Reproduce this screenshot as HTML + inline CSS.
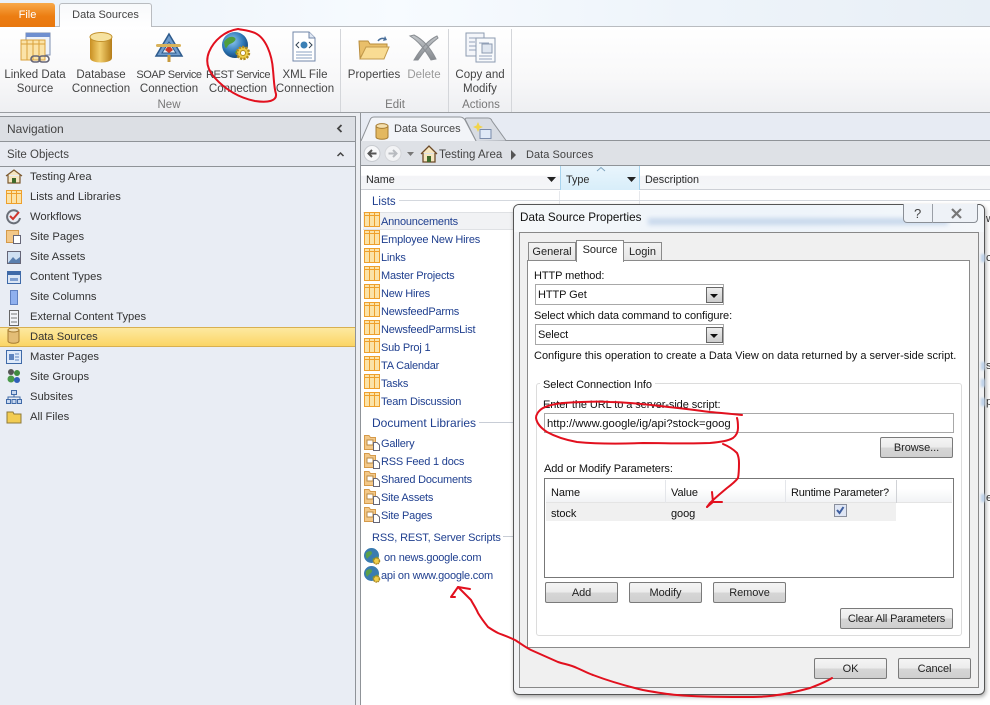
<!DOCTYPE html>
<html><head><meta charset="utf-8"><style>
html,body{margin:0;padding:0}
body{width:990px;height:705px;overflow:hidden;position:relative;background:#fff;font-family:"Liberation Sans",sans-serif;font-size:11.2px;color:#2a2a2a}
.a{position:absolute;box-sizing:border-box}
.t{position:absolute;white-space:nowrap;line-height:14px}
.c{position:absolute;text-align:center;line-height:14px;white-space:nowrap;transform:translateX(-50%);font-size:11.500px;margin-top:1px}
.n{font-size:11px;letter-spacing:-.4px}
.l{color:#1f3f8f;font-size:11px;letter-spacing:-.2px;margin-top:1px}
.h{color:#1f3f8f;font-size:12px}
.d{color:#111;font-size:11px;letter-spacing:-.08px;margin-top:1px}
.btn{position:absolute;box-sizing:border-box;border:1px solid #7a7a7a;border-radius:2px;background:linear-gradient(#f4f4f4 0,#ececec 48%,#d6d6d6 52%,#cfcfcf 100%);text-align:center;color:#222;font-size:11px;letter-spacing:-.08px}
.nav{position:absolute;left:30px;color:#333;line-height:14px;margin-top:1px}
svg{position:absolute;overflow:visible}
</style></head><body>

<!-- top strip -->
<div class="a" style="left:0;top:0;width:990px;height:27px;background:linear-gradient(90deg,#eaf1f8,#f7fbff 40%,#eef4fa 70%,#e8eff6);"></div>
<div class="a" style="left:0;top:26px;width:990px;height:1px;background:#b9bcc0"></div>
<div class="a" style="left:0;top:3px;width:55px;height:24px;background:linear-gradient(#f8a94a,#ec7d12 55%,#e8780f);border-radius:0 3px 0 0;color:#fff;text-align:center;line-height:24px;font-size:11px">File</div>
<div class="a" style="left:59px;top:3px;width:93px;height:25px;background:linear-gradient(#f8f9fb,#fff);border:1px solid #b9bcc0;border-bottom:none;border-radius:3px 3px 0 0;text-align:center;line-height:23px;color:#444;font-size:11px">Data Sources</div>

<!-- ribbon -->
<div class="a" style="left:0;top:27px;width:990px;height:85px;background:linear-gradient(#fff,#f8f8f9 60%,#eeeff2)"></div>
<div class="a" style="left:340px;top:29px;width:1px;height:83px;background:#d4d6da"></div>
<div class="a" style="left:448px;top:29px;width:1px;height:83px;background:#d4d6da"></div>
<div class="a" style="left:511px;top:29px;width:1px;height:83px;background:#d4d6da"></div>
<div class="a" style="left:0;top:112px;width:990px;height:1px;background:#9a9da1"></div>
<div class="a" style="left:0;top:113px;width:990px;height:592px;background:#eceef2"></div>

<div class="c" style="left:35px;top:67px;color:#444">Linked Data<br>Source</div>
<div class="c" style="left:101px;top:67px;color:#444">Database<br>Connection</div>
<div class="c" style="left:169px;top:67px;color:#444"><span class="n">SOAP Service</span><br>Connection</div>
<div class="c" style="left:238px;top:67px;color:#444"><span class="n">REST Service</span><br>Connection</div>
<div class="c" style="left:305px;top:67px;color:#444">XML File<br>Connection</div>
<div class="c" style="left:374px;top:67px;color:#444">Properties</div>
<div class="c" style="left:424px;top:67px;color:#9a9a9a">Delete</div>
<div class="c" style="left:480px;top:67px;color:#444">Copy and<br>Modify</div>
<div class="c" style="left:169px;top:97px;color:#777">New</div>
<div class="c" style="left:395px;top:97px;color:#777">Edit</div>
<div class="c" style="left:481px;top:97px;color:#777">Actions</div>

<!-- ribbon icons -->
<svg style="left:0;top:0" width="520" height="66" viewBox="0 0 520 66">
 <defs>
  <linearGradient id="db" x1="0" x2="1" y1="0" y2="0"><stop offset="0" stop-color="#c98f22"/><stop offset=".45" stop-color="#f2cf6e"/><stop offset="1" stop-color="#b57d18"/></linearGradient>
  <radialGradient id="gl" cx=".4" cy=".35" r=".7"><stop offset="0" stop-color="#8ec7ef"/><stop offset=".6" stop-color="#2e78b8"/><stop offset="1" stop-color="#123f6f"/></radialGradient>
  <linearGradient id="gx" x1="0" x2="0" y1="0" y2="1"><stop offset="0" stop-color="#c4c8cc"/><stop offset="1" stop-color="#85898e"/></linearGradient>
 </defs>
 <!-- linked -->
 <rect x="26" y="33" width="24" height="22" fill="#eef3fb" stroke="#7d8fb0"/><rect x="26" y="33" width="24" height="4" fill="#6f8fcf"/>
 <rect x="21" y="40" width="24" height="20" fill="#fbe3a8" stroke="#d9a23c"/><path d="M21 44H45M27 40V60M33 40V60M39 40V60" stroke="#d9a23c" fill="none"/>
 <rect x="31" y="56" width="9" height="6" rx="3" fill="none" stroke="#667" stroke-width="1.600"/><rect x="39" y="56" width="10" height="6" rx="3" fill="none" stroke="#667" stroke-width="1.600"/>
 <!-- database -->
 <path d="M90 37V58C90 64 112 64 112 58V37Z" fill="url(#db)"/><ellipse cx="101" cy="37" rx="11" ry="4.500" fill="#f6e2a0" stroke="#c3912c"/>
 <!-- soap -->
 <path d="M169 34L182 56H156Z" fill="#6f9ccc" stroke="#2d5a8c" stroke-width="1.500"/><path d="M169 42L176 53H162Z" fill="#e8eef6" stroke="#2d5a8c"/><path d="M169 45L173 50 169 53 165 50Z" fill="#c8382c"/>
 <rect x="156" y="44" width="25" height="3" rx="1.500" fill="#d9b25a"/><rect x="167.500" y="55" width="3" height="7" fill="#c79a3c"/>
 <!-- rest -->
 <circle cx="235" cy="45" r="13" fill="url(#gl)"/><path d="M224 42c4-6 9-6 11-4s-2 5-5 6-3 6-5 3zM235 52c3-3 7-3 9-5 1 3-1 7-5 8-2 0-4-1-4-3z" fill="#4f9e3e"/>
 <circle cx="243" cy="53" r="6" fill="#f0cf4a" stroke="#b08a1e" stroke-width="2.400" stroke-dasharray="2.200 1.200"/><circle cx="243" cy="53" r="2.500" fill="#fff" stroke="#b08a1e"/>
 <!-- xml -->
 <path d="M293 32H309L315 38V61H293Z" fill="#fff" stroke="#7287a8"/><path d="M309 32V38H315" fill="#dfe7f3" stroke="#7287a8"/><path d="M299 42l-3 3 3 3M309 42l3 3-3 3" stroke="#345" fill="none"/><circle cx="304" cy="45" r="3.500" fill="#3a7fb5"/><path d="M296 52H312M296 55H312M296 58H312" stroke="#8aa0c0"/>
 <!-- properties -->
 <path d="M360 58L359 41H368L370 44H387L387 47H367Z" fill="#e9bf6a" stroke="#b88c3c"/><path d="M360 59L366 47H389L384 59Z" fill="#f9dc93" stroke="#c29a4c"/><path d="M378 41c2-3 5-3 7-2" stroke="#4a6f9a" stroke-width="1.500" fill="none"/><path d="M385 36l2 4-4 1z" fill="#4a6f9a"/>
 <!-- delete -->
 <path d="M410 36C418 41 424 48 431 60L436 59C431 49 424 40 414 35ZM437 36C428 40 420 50 414 60L418 60C424 51 430 44 438 38Z" fill="url(#gx)" stroke="#8a8e93" stroke-width="1"/>
 <!-- copy -->
 <rect x="466" y="33" width="18" height="23" fill="#f4f6fa" stroke="#8c9bb0"/><path d="M469 38h12M469 42h6M469 46h12M469 50h12" stroke="#93a3bb"/><rect x="476" y="38" width="19" height="24" fill="#f8fafc" stroke="#8c9bb0"/><rect x="482" y="44" width="10" height="9" fill="#dfe6f0" stroke="#8c9bb0"/><path d="M479 43h10M479 56h13M479 59h13" stroke="#93a3bb"/>
</svg>

<!-- navigation panel -->
<div class="a" style="left:0;top:116px;width:356px;height:589px;background:#e9edf4;border-top:1px solid #8f9398;border-right:1px solid #8f9398"></div>
<div class="a" style="left:0;top:117px;width:355px;height:25px;background:#dcdfe4;border-bottom:1px solid #8f9398"></div>
<div class="t" style="left:7px;top:122px;color:#444;font-size:12px">Navigation</div>
<svg style="left:336px;top:124px" width="8" height="10"><path d="M5.500 1L2 4.500 5.500 8" stroke="#444" stroke-width="1.800" fill="none"/></svg>
<div class="a" style="left:0;top:142px;width:355px;height:25px;border-bottom:1px solid #8f9398;background:#e8ebf2"></div>
<div class="t" style="left:7px;top:148px;color:#444;font-size:11.500px">Site Objects</div>
<svg style="left:336px;top:151px" width="12" height="8"><path d="M1.500 5L4.500 2 7.500 5" stroke="#444" stroke-width="1.500" fill="none"/></svg>
<div class="a" style="left:0;top:327px;width:355px;height:20px;background:linear-gradient(#fde9a0,#fbd565);border-top:1px solid #d8b050;border-bottom:1px solid #d8b050"></div>

<div class="nav" style="top:169px">Testing Area</div>
<div class="nav" style="top:189px">Lists and Libraries</div>
<div class="nav" style="top:209px">Workflows</div>
<div class="nav" style="top:229px">Site Pages</div>
<div class="nav" style="top:249px">Site Assets</div>
<div class="nav" style="top:269px">Content Types</div>
<div class="nav" style="top:289px">Site Columns</div>
<div class="nav" style="top:309px">External Content Types</div>
<div class="nav" style="top:329px">Data Sources</div>
<div class="nav" style="top:349px">Master Pages</div>
<div class="nav" style="top:369px">Site Groups</div>
<div class="nav" style="top:389px">Subsites</div>
<div class="nav" style="top:409px">All Files</div>

<svg style="left:0;top:160px" width="30" height="270">
 <path d="M6 16L14 10 22 16M8 15V23H20V15" fill="#f6e6c0" stroke="#7c5a30" stroke-width="1.200"/><rect x="12" y="18" width="4" height="5" fill="#3f6a2a"/>
 <rect x="6.500" y="30.500" width="15" height="13" fill="#fbe3a8" stroke="#eea02c"/><path d="M6.500 33.500H21.500M11.500 30.500V43.500M16.500 30.500V43.500" stroke="#eea02c" fill="none"/>
 <path d="M18 52A6.500 6.500 0 1 0 20 58" fill="none" stroke="#6a6f78" stroke-width="2"/><path d="M10 56l3 3 6-7" stroke="#d0352c" stroke-width="2" fill="none"/>
 <rect x="6.500" y="70.500" width="12" height="12" fill="#f3c888" stroke="#d59a4a"/><rect x="13.500" y="75.500" width="7" height="8" fill="#fff" stroke="#667"/>
 <rect x="7.500" y="91.500" width="13" height="12" fill="#cfe0f2" stroke="#667"/><path d="M8 103l5-6 3 3 4-3v6z" fill="#5a7fae"/>
 <rect x="7.500" y="111.500" width="13" height="12" fill="#dbe6f5" stroke="#3f6aa8"/><rect x="8" y="112" width="12" height="3" fill="#3f6aa8"/><rect x="10" y="118" width="8" height="3" fill="#7f9fd0"/>
 <rect x="10.500" y="130.500" width="7" height="14" fill="#8fb0ee" stroke="#5f80c0"/>
 <rect x="9.500" y="150.500" width="9" height="15" fill="#f2f4f8" stroke="#666"/><path d="M11 154h6M11 158h6M11 162h6" stroke="#777"/>
 <path d="M8 170V181C8 184 19 184 19 181V170Z" fill="#e3bd76" stroke="#a67c32"/><ellipse cx="13.500" cy="170" rx="5.500" ry="2" fill="#f4dfae" stroke="#a67c32"/>
 <rect x="6.500" y="190.500" width="15" height="13" fill="#dfeafa" stroke="#3f6aa8"/><rect x="9" y="194" width="5" height="6" fill="#5f85c0"/><path d="M15 194h4M15 197h4M15 200h4" stroke="#5f85c0"/>
 <circle cx="11" cy="212" r="3" fill="#555"/><circle cx="17" cy="213" r="3" fill="#3f8a3f"/><circle cx="11" cy="219" r="3.500" fill="#4a9a4a"/><circle cx="17" cy="220" r="3" fill="#3060b8"/>
 <rect x="11.500" y="230.500" width="5" height="4" fill="#c8d8f0" stroke="#3f6aa8"/><path d="M14 235v2M8 239v-2H20v2" stroke="#3f6aa8" fill="none"/><rect x="6.500" y="239.500" width="4" height="4" fill="#c8d8f0" stroke="#3f6aa8"/><rect x="12" y="239.500" width="4" height="4" fill="#c8d8f0" stroke="#3f6aa8"/><rect x="17.500" y="239.500" width="4" height="4" fill="#c8d8f0" stroke="#3f6aa8"/>
 <path d="M7 252h6l1 2h7v9H7z" fill="#f2cc52" stroke="#8f7a3a"/>
</svg>

<!-- right panel -->
<div class="a" style="left:360px;top:113px;width:630px;height:592px;background:#fff;border-left:1px solid #8f9398"></div>
<div class="a" style="left:360px;top:113px;width:630px;height:28px;background:#e7ebf3;border-bottom:1px solid #8f9398;border-left:1px solid #8f9398"></div>
<svg style="left:360px;top:116px" width="150" height="26">
 <path d="M116 25L106 5Q104 2 107 2H128Q131 2 132 5L146 24.500" fill="#d8dce3" stroke="#8f9398"/>
 <path d="M1 25L10 4Q11 1 14 1H100Q103 1 105 4L116 25" fill="#f2f4f8" stroke="#8f9398"/>
 <path d="M16 10V21C16 24 28 24 28 21V10Z" fill="#e3b860" stroke="#a67c32"/><ellipse cx="22" cy="10" rx="6" ry="2.400" fill="#f4dfae" stroke="#a67c32"/>
 <rect x="120" y="13.500" width="11" height="9" fill="#dfe9f7" stroke="#7a8cab"/><path d="M118 6l1.500 3.500L123 11l-3.500 1.500L118 16l-1.500-3.500L113 11l3.500-1.500z" fill="#f2d44a"/>
</svg>
<div class="t" style="left:394px;top:122px;color:#444;font-size:11px">Data Sources</div>
<div class="a" style="left:360px;top:141px;width:630px;height:25px;background:#dee1e6;border-bottom:1px solid #8f9398;border-left:1px solid #8f9398"></div>
<svg style="left:362px;top:143px" width="80" height="24">
 <circle cx="10" cy="10.500" r="8" fill="#f7f8fa" stroke="#c8cbd0"/><path d="M14.500 10.500H7M10 7L6.500 10.500 10 14" stroke="#555" stroke-width="2" fill="none"/>
 <circle cx="31" cy="10.500" r="8" fill="#f2f3f5" stroke="#d4d6da"/><path d="M26.500 10.500H34M31 7L34.500 10.500 31 14" stroke="#b8bbc0" stroke-width="2" fill="none"/>
 <path d="M45 9h7l-3.500 4z" fill="#777"/>
 <path d="M59 11L67 3 75 11M61 10V19H73V10" fill="#f6e6c0" stroke="#6c4a28" stroke-width="1.300"/><rect x="65" y="13" width="4" height="6" fill="#3f6a2a"/>
</svg>
<div class="t" style="left:439px;top:148px;color:#444;font-size:11.500px">Testing Area</div>
<svg style="left:510px;top:150px" width="8" height="10"><path d="M1 0L6 5 1 10z" fill="#555"/></svg>
<div class="t" style="left:526px;top:148px;color:#444;font-size:11px;letter-spacing:.05px">Data Sources</div>

<!-- column headers -->
<div class="a" style="left:361px;top:166px;width:629px;height:24px;background:linear-gradient(#fff 0,#fff 40%,#f3f4f7 45%,#f5f6f8 100%);border-bottom:1px solid #cdd0d6"></div>
<div class="a" style="left:560px;top:166px;width:80px;height:24px;background:linear-gradient(#e9f5fc,#d8eefa);border-left:1px solid #a8d4ee;border-right:1px solid #a8d4ee"></div>
<div class="t" style="left:366px;top:173px;font-size:10.800px">Name</div>
<div class="t" style="left:566px;top:173px;font-size:10.800px">Type</div>
<div class="t" style="left:645px;top:173px;font-size:10.800px">Description</div>
<svg style="left:0;top:0" width="640" height="190"><path d="M547 177h9l-4.500 5zM627 177h9l-4.500 5z" fill="#222"/><path d="M597 171l4-3.500 4 3.500" stroke="#7fa4be" fill="none"/></svg>
<div class="a" style="left:559px;top:191px;width:1px;height:30px;background:#e6e8ec"></div>
<div class="a" style="left:639px;top:191px;width:1px;height:14px;background:#e6e8ec"></div>

<!-- groups -->
<div class="t h" style="left:372px;top:195px;font-size:11.500px">Lists</div>
<div class="a" style="left:399px;top:200px;width:591px;height:1px;background:#d4d8de"></div>
<div class="a" style="left:363px;top:212px;width:150px;height:18px;background:#f1f2f4;border-top:1px solid #dfe1e4;border-bottom:1px solid #dfe1e4"></div>
<div class="t l" style="left:381px;top:214px">Announcements</div>
<div class="t l" style="left:381px;top:232px">Employee New Hires</div>
<div class="t l" style="left:381px;top:250px">Links</div>
<div class="t l" style="left:381px;top:268px">Master Projects</div>
<div class="t l" style="left:381px;top:286px">New Hires</div>
<div class="t l" style="left:381px;top:304px">NewsfeedParms</div>
<div class="t l" style="left:381px;top:322px">NewsfeedParmsList</div>
<div class="t l" style="left:381px;top:340px">Sub Proj 1</div>
<div class="t l" style="left:381px;top:358px">TA Calendar</div>
<div class="t l" style="left:381px;top:376px">Tasks</div>
<div class="t l" style="left:381px;top:394px">Team Discussion</div>
<div class="t h" style="left:372px;top:416px">Document Libraries</div>
<div class="a" style="left:479px;top:422px;width:35px;height:1px;background:#c8cdd6"></div>
<div class="t l" style="left:381px;top:436px">Gallery</div>
<div class="t l" style="left:381px;top:454px">RSS Feed 1 docs</div>
<div class="t l" style="left:381px;top:472px">Shared Documents</div>
<div class="t l" style="left:381px;top:490px">Site Assets</div>
<div class="t l" style="left:381px;top:508px">Site Pages</div>
<div class="t h" style="left:372px;top:531px;font-size:11px;letter-spacing:-.13px">RSS, REST, Server Scripts</div>
<div class="a" style="left:503px;top:536px;width:11px;height:1px;background:#c8cdd6"></div>
<div class="t l" style="left:384px;top:550px">on news.google.com</div>
<div class="t l" style="left:381px;top:568px">api on www.google.com</div>

<svg style="left:360px;top:205px" width="30" height="380">
 <defs><g id="li"><rect x="4.500" y="0.500" width="15" height="14" fill="#fbe3a8" stroke="#eea02c"/><path d="M4.500 3.500H19.500M9.500 .5V14.500M14.500 .5V14.500" stroke="#eea02c" fill="none"/></g>
 <g id="dc"><path d="M4.500 .5H9L10.500 2.500H15.500V14.500H4.500Z" fill="#f3c888" stroke="#d59a4a"/><rect x="7" y="5" width="6" height="5" fill="#fff" stroke="#b98a44"/><path d="M13.500 7.500H17L19.500 10V15.500H13.500Z" fill="#fff" stroke="#667"/></g>
 <g id="gb"><circle cx="11.500" cy="7.500" r="7.500" fill="#3a7cb0"/><path d="M6 5c3-3 6-2 6 0s-3 3-4 5-3-2-2-5zM12 11c2-1 5-2 6-3 0 3-2 5-4 5z" fill="#5aa04a"/><circle cx="16.500" cy="13" r="3" fill="#f0cf4a" stroke="#a8861e" stroke-dasharray="1.500 .6" stroke-width="1.500"/></g></defs>
 <use href="#li" y="7"/><use href="#li" y="25"/><use href="#li" y="43"/><use href="#li" y="61"/><use href="#li" y="79"/><use href="#li" y="97"/><use href="#li" y="115"/><use href="#li" y="133"/><use href="#li" y="151"/><use href="#li" y="169"/><use href="#li" y="187"/>
 <use href="#dc" y="230"/><use href="#dc" y="248"/><use href="#dc" y="266"/><use href="#dc" y="284"/><use href="#dc" y="302"/>
 <use href="#gb" y="343"/><use href="#gb" y="361"/>
</svg>

<!-- peeking text behind dialog -->
<div class="t" style="left:986px;top:212px;color:#333">w</div>
<div class="t" style="left:986px;top:251px;color:#333">c</div>
<div class="t" style="left:986px;top:359px;color:#333">s,</div>
<div class="t" style="left:986px;top:395px;color:#333">pi</div>
<div class="t" style="left:986px;top:491px;color:#333">e,</div>

<!-- dialog -->
<div class="a" style="left:513px;top:204px;width:472px;height:491px;background:#f1f2f4;border:1px solid #555;border-radius:6px;box-shadow:1px 2px 4px rgba(0,0,0,.35)"></div>
<div class="a" style="left:514px;top:205px;width:470px;height:27px;background:linear-gradient(90deg,#f6f8fa,#f0f5fa 30%,#eef4fa 60%,#f4f7fa);border-radius:5px 5px 0 0"></div>
<div class="a" style="left:648px;top:218px;width:300px;height:7px;background:#b4cae6;filter:blur(2.500px);opacity:.65"></div>
<div class="a" style="left:981px;top:254px;width:4px;height:8px;background:#bcd0e8;filter:blur(1px)"></div>
<div class="a" style="left:981px;top:362px;width:4px;height:8px;background:#bcd0e8;filter:blur(1px)"></div>
<div class="a" style="left:981px;top:379px;width:4px;height:8px;background:#bcd0e8;filter:blur(1px)"></div>
<div class="a" style="left:981px;top:398px;width:4px;height:8px;background:#bcd0e8;filter:blur(1px)"></div>
<div class="a" style="left:981px;top:494px;width:4px;height:8px;background:#bcd0e8;filter:blur(1px)"></div>
<div class="t" style="left:520px;top:211px;font-size:11.700px;color:#111">Data Source Properties</div>
<div class="a" style="left:903px;top:204px;width:75px;height:19px;background:#eef2f7;border:1px solid #8a8f96;border-top:none;border-radius:0 0 4px 4px"></div>
<div class="a" style="left:932px;top:204px;width:1px;height:19px;background:#9a9fa6"></div>
<div class="t" style="left:914px;top:207px;font-size:13px;color:#444">?</div>
<svg style="left:950px;top:208px" width="14" height="12"><path d="M2 1L11 10M11 1L2 10" stroke="#777" stroke-width="2.200" fill="none"/></svg>
<div class="a" style="left:519px;top:232px;width:460px;height:456px;border:1px solid #888;background:#f0f0f0"></div>

<!-- tabs -->
<div class="a" style="left:528px;top:242px;width:48px;height:19px;background:linear-gradient(#f4f4f4,#e4e4e4);border:1px solid #8a8a8a;border-bottom:none;text-align:center;line-height:18px;color:#222;font-size:11px">General</div>
<div class="a" style="left:576px;top:240px;width:48px;height:22px;background:#fff;border:1px solid #8a8a8a;border-bottom:none;text-align:center;line-height:18px;z-index:3;color:#222;font-size:11px">Source</div>
<div class="a" style="left:623px;top:242px;width:39px;height:19px;background:linear-gradient(#f4f4f4,#e4e4e4);border:1px solid #8a8a8a;border-bottom:none;text-align:center;line-height:18px;color:#222;font-size:11px">Login</div>
<div class="a" style="left:527px;top:260px;width:443px;height:388px;background:#fff;border:1px solid #8a8a8a;z-index:2"></div>

<div style="position:absolute;left:0;top:0;z-index:4;width:990px;height:705px">
<div class="t d" style="left:534px;top:268px">HTTP method:</div>
<div class="a" style="left:535px;top:284px;width:189px;height:21px;border:1px solid #a8a8a8;background:#fff"></div>
<div class="t d" style="left:538px;top:287px">HTTP Get</div>
<div class="a" style="left:706px;top:287px;width:17px;height:16px;background:linear-gradient(#eee,#ccc);border:1px solid #666"></div>
<div class="t d" style="left:534px;top:308px">Select which data command to configure:</div>
<div class="a" style="left:535px;top:324px;width:189px;height:21px;border:1px solid #a8a8a8;background:#fff"></div>
<div class="t d" style="left:538px;top:327px">Select</div>
<div class="a" style="left:706px;top:327px;width:17px;height:16px;background:linear-gradient(#eee,#ccc);border:1px solid #666"></div>
<svg style="left:0;top:0" width="730" height="345"><path d="M710 294h8l-4 4zM710 334h8l-4 4z" fill="#111"/></svg>
<div class="t d" style="left:534px;top:348px;letter-spacing:0">Configure this operation to create a Data View on data returned by a server-side script.</div>

<div class="a" style="left:536px;top:383px;width:426px;height:253px;border:1px solid #dcdcdc;border-radius:3px"></div>
<div class="t d" style="left:540px;top:377px;background:#fff;padding:0 3px">Select Connection Info</div>
<div class="t d" style="left:543px;top:397px">Enter the URL to a server-side script:</div>
<div class="a" style="left:544px;top:413px;width:410px;height:20px;border:1px solid #a8a8a8;background:#fff"></div>
<div class="t d" style="left:547px;top:416px;font-size:11.300px;letter-spacing:0">http://www.google/ig/api?stock=goog</div>
<div class="btn" style="left:880px;top:437px;width:73px;height:21px;line-height:20px">Browse...</div>
<div class="t d" style="left:544px;top:461px">Add or Modify Parameters:</div>

<div class="a" style="left:544px;top:478px;width:410px;height:100px;border:1px solid #777;background:#fff"></div>
<div class="a" style="left:546px;top:480px;width:406px;height:23px;background:linear-gradient(#fff,#fff 40%,#f2f3f5);border-bottom:1px solid #e4e4e4"></div>
<div class="a" style="left:665px;top:480px;width:1px;height:23px;background:#e4e6ea"></div>
<div class="a" style="left:785px;top:480px;width:1px;height:23px;background:#e4e6ea"></div>
<div class="a" style="left:896px;top:480px;width:1px;height:23px;background:#d0d2d6"></div>
<div class="t d" style="left:551px;top:485px">Name</div>
<div class="t d" style="left:671px;top:485px">Value</div>
<div class="t d" style="left:791px;top:485px;letter-spacing:-.2px">Runtime Parameter?</div>
<div class="a" style="left:546px;top:503px;width:350px;height:18px;background:#f0f0f0"></div>
<div class="t d" style="left:551px;top:506px">stock</div>
<div class="t d" style="left:671px;top:506px">goog</div>
<div class="a" style="left:834px;top:504px;width:13px;height:13px;background:#dfe6f4;border:1px solid #8a8f9c"></div>
<svg style="left:836px;top:506px" width="9" height="9"><path d="M1 4l2.500 3L7.500 1" stroke="#3f5f9f" stroke-width="2" fill="none"/></svg>

<div class="btn" style="left:545px;top:582px;width:73px;height:21px;line-height:20px">Add</div>
<div class="btn" style="left:629px;top:582px;width:73px;height:21px;line-height:20px">Modify</div>
<div class="btn" style="left:713px;top:582px;width:73px;height:21px;line-height:20px">Remove</div>
<div class="btn" style="left:840px;top:608px;width:113px;height:21px;line-height:20px;letter-spacing:-.18px">Clear All Parameters</div>
<div class="btn" style="left:814px;top:658px;width:73px;height:21px;line-height:20px">OK</div>
<div class="btn" style="left:898px;top:658px;width:73px;height:21px;line-height:20px">Cancel</div>

<!-- red annotations -->
<svg style="left:0;top:0" width="990" height="705" viewBox="0 0 990 705">
 <g fill="none" stroke="#e2101e" stroke-width="2" stroke-linecap="round" stroke-linejoin="round">
  <path d="M238 29C225 31 214 40 209 52C205 62 208 70 214 77C222 86 235 97 255 101C268 103 277 101 276 94C274 88 274 80 273 70C272 55 266 38 255 33C248 30 242 30 238 29Z"/>
  <path d="M742 415C732 414 722 413 710 412C695 410 678 408 660 406C642 404 625 402 610 402C593 401 578 402 563 403C553 404 547 406 543 408C538 411 536 415 536 418C537 424 541 428 547 432C556 437 566 440 577 442C598 444 620 444 643 443C665 443 688 444 710 443C720 442 728 441 733 438C737 435 738 431 738 428C738 425 738 421 737 418"/>
  <path d="M723 444C728 446 733 449 737 453C739 457 739 460 739 463C739 468 739 473 738 478C735 482 731 485 727 488C721 493 714 499 710 503L707 507"/>
  <path d="M712 492L713 502M707 507L713 502L722 502"/>
  <path d="M832 678C826 682 818 685 810 688C799 691 788 694 777 695C766 697 755 697 743 697C721 697 699 697 677 695C665 694 654 692 643 690C626 686 609 681 593 675C587 673 582 670 577 668C571 665 564 664 558 662C549 658 540 654 531 650C525 647 520 643 515 640C509 637 503 635 498 633C494 631 491 629 488 627C484 622 481 618 478 613C476 608 473 604 471 600C468 597 464 593 461 590L458 587"/>
  <path d="M458 587L470 589M458 587L451 597L455 597"/>
 </g>
</svg>
</div>
</body></html>
